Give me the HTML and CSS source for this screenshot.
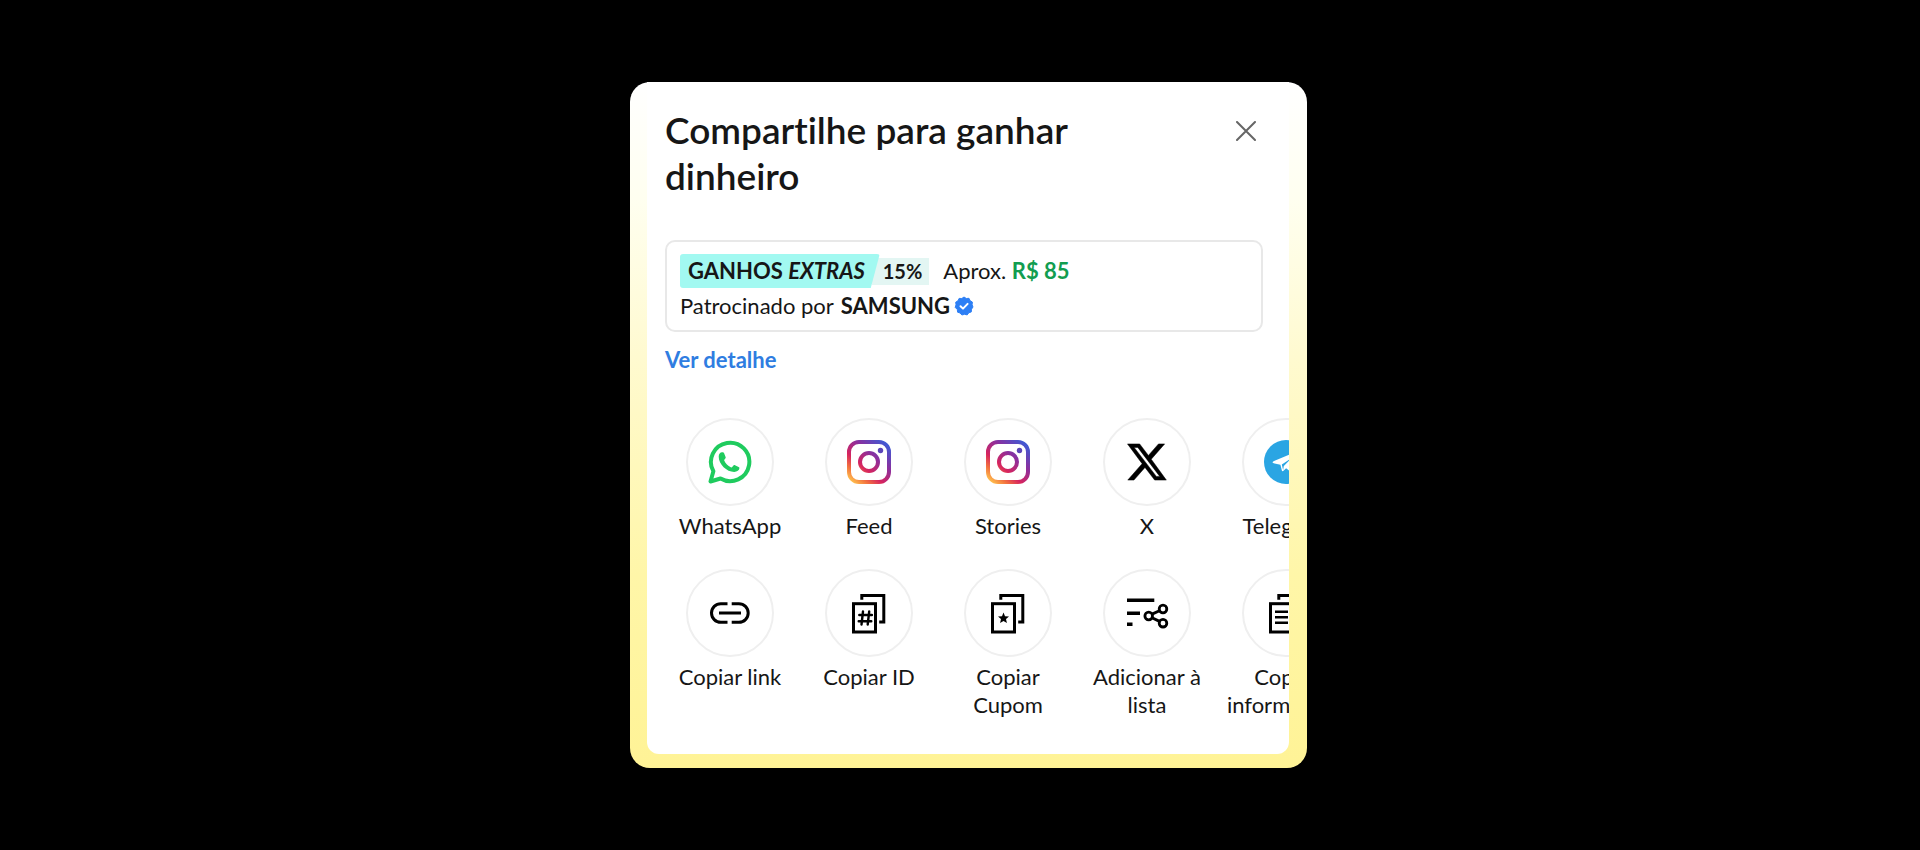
FILE: index.html
```html
<!DOCTYPE html>
<html lang="pt-BR">
<head>
    <meta charset="utf-8">
    <title>Compartilhe para ganhar dinheiro</title>
    <link rel="stylesheet" href="styles.css">
</head>
<body>
    <main class="card">
        <div class="panel">
            <header class="header">
                <h1>Compartilhe para ganhar dinheiro</h1>
                <button class="close" aria-label="Fechar">
                    <svg width="20" height="20" viewBox="0 0 20 20"><path d="M1 1l18 18M19 1L1 19" stroke="#666" stroke-width="2" stroke-linecap="round"/></svg>
                </button>
            </header>

            <section class="earnings">
                <div class="line">
                    <span class="tag">GANHOS <em>EXTRAS</em></span>
                    <span class="percent">15%</span>
                    <span>Aprox. <b class="amount">R$ 85</b></span>
                </div>
                <div class="line sponsor">
                    <span>Patrocinado por</span>
                    <b>SAMSUNG</b>
                    <svg width="20" height="20" viewBox="0 0 20 20">
                        <path fill="#2d7ff5" stroke="#2d7ff5" stroke-linejoin="round" d="M10 1l2.3 1.5 2.7-.2 1.1 2.4 2.3 1.4-.3 2.7L19 11l-1.5 2.2-.2 2.7-2.5.9-1.6 2.1-2.7-.6-2.6.7-1.8-2-2.5-.8-.3-2.7L1.2 11.4 2 8.8 1.7 6.2 4 4.8l1.1-2.4 2.7.1z"/>
                        <path fill="none" stroke="#fff" stroke-width="2" stroke-linecap="round" stroke-linejoin="round" d="M6.5 10.2l2.5 2.4 4.6-4.7"/>
                    </svg>
                </div>
            </section>
            <a class="details" href="#">Ver detalhe</a>

            <div class="share">
                <button class="item">
                    <span class="circle">
                        <svg width="44" height="44" viewBox="0 0 44 44">
                            <path fill="none" stroke="#1fcb5e" stroke-width="4" stroke-linejoin="round" d="M2.5 41.5l2.9-10.2A19.2 19.2 0 1 1 12.5 38.5z"/>
                            <path fill="#1fcb5e" d="M14 12.3c-1.8 0-3.3 1.8-3.3 4.4 0 7.5 8 15.2 15.5 15.2 2.9 0 5-1.6 5.2-3.6.1-.7-.2-1-.8-1.3L27 25.2c-.6-.3-1.1-.2-1.5.3l-1.3 1.6c-.4.5-.9.5-1.4.2-3-1.5-5.2-3.9-6.5-6.5-.2-.4-.1-.8.2-1.2l1-1.3c.3-.4.3-.8.1-1.3l-1.6-3.9c-.2-.6-.6-.8-1.2-.8z"/>
                        </svg>
                    </span>
                    WhatsApp
                </button>
                <button class="item">
                    <span class="circle">
                        <svg width="44" height="44" viewBox="0 0 44 44" fill="none" stroke="url(#insta)" stroke-width="4">
                            <defs>
                                <linearGradient id="insta" gradientUnits="userSpaceOnUse" x1="5" y1="42" x2="39" y2="2">
                                    <stop offset="0" stop-color="#ffc04d"/>
                                    <stop offset=".18" stop-color="#f2703f"/>
                                    <stop offset=".36" stop-color="#d6245f"/>
                                    <stop offset=".65" stop-color="#8a2f9e"/>
                                    <stop offset="1" stop-color="#3c5bd6"/>
                                </linearGradient>
                            </defs>
                            <rect x="2" y="2" width="40" height="40" rx="10"/>
                            <circle cx="22" cy="22" r="9"/>
                            <circle cx="33.5" cy="10.5" r="2.7" fill="#5a45b8" stroke="none"/>
                        </svg>
                    </span>
                    Feed
                </button>
                <button class="item">
                    <span class="circle">
                        <svg width="44" height="44" viewBox="0 0 44 44" fill="none" stroke="url(#insta)" stroke-width="4">
                            <rect x="2" y="2" width="40" height="40" rx="10"/>
                            <circle cx="22" cy="22" r="9"/>
                            <circle cx="33.5" cy="10.5" r="2.7" fill="#5a45b8" stroke="none"/>
                        </svg>
                    </span>
                    Stories
                </button>
                <button class="item">
                    <span class="circle">
                        <svg width="40" height="40" viewBox="0 0 24 24"><path stroke="#000" stroke-width=".3" d="M18.901 1.153h3.68l-8.04 9.19L23.6 22.846h-7.006l-5.8-7.584-6.638 7.584H.474l8.6-9.83L.3 1.154h7.294l5.243 6.932ZM17.61 20.644h2.039L6.486 3.24H4.298Z"/></svg>
                    </span>
                    X
                </button>
                <button class="item">
                    <span class="circle">
                        <svg width="44" height="44" viewBox="0 0 44 44">
                            <circle cx="22" cy="22" r="22" fill="#2aa5e3"/>
                            <path fill="#fff" d="M8.6 22.6c0-.8.7-1.2 2-1.8L31 12.200c1.500-.5 2.500.2 2.200 2l-3.300 17c-.3 1.500-1.300 1.800-2.600 1l-5.200-3.900-2.600 2.500c-.8.8-1.600.5-1.700-.6l-1.400-5.500-5.800-1.200c-1.200-.2-2-.5-2-.9z"/>
                            <path fill="#2aa5e3" d="M17.8 24.600l10.200-6.900-8.200 8.400-.7 4z"/>
                        </svg>
                    </span>
                    Telegram
                </button>

                <button class="item">
                    <span class="circle">
                        <svg width="44" height="44" viewBox="0 0 44 44" fill="none" stroke="#000" stroke-width="3"><path d="M19.5 12.7h-6.7a9.3 9.3 0 0 0 0 18.6h6.7M23.7 12.7h7.2a9.3 9.3 0 0 1 0 18.6h-7.2M11 22h22"/></svg>
                    </span>
                    Copiar link
                </button>
                <button class="item">
                    <span class="circle">
                        <svg width="44" height="44" viewBox="0 0 44 44" fill="none" stroke="#000" stroke-width="3">
                            <rect x="6.5" y="12.7" width="22" height="28.3"/>
                            <path d="M14.8 8.8V4.4h22v26.7h-4.6"/>
                            <path stroke-width="2.4" stroke-linecap="round" d="M16 20.5l-1.5 13M22.2 20.5l-1.5 13M12.3 24h12.6M11.7 30.2h12.6"/>
                        </svg>
                    </span>
                    Copiar ID
                </button>
                <button class="item">
                    <span class="circle">
                        <svg width="44" height="44" viewBox="0 0 44 44" fill="none" stroke="#000" stroke-width="3">
                            <rect x="6.5" y="12.7" width="22" height="28.3"/>
                            <path d="M14.8 8.8V4.4h22v26.7h-4.6"/>
                            <path fill="#000" stroke="none" d="M17.5 21.5l1.5 3.7 4 .3-3 2.6.9 3.9-3.4-2.1-3.4 2.1.9-3.9-3-2.6 4-.3z"/>
                        </svg>
                    </span>
                    Copiar Cupom
                </button>
                <button class="item">
                    <span class="circle">
                        <svg width="44" height="44" viewBox="0 0 44 44" fill="none" stroke="#000" stroke-width="3">
                            <path stroke-width="3.5" d="M2 9.2h27.3M2 22.2h13M2 33.2h5.5"/>
                            <path d="M26.5 23.3l8.5-3.8M26.5 26.5l8.5 4.2"/>
                            <g stroke-width="2.8"><circle cx="23.7" cy="25" r="3.8"/><circle cx="38" cy="18" r="3.8"/><circle cx="38" cy="32.2" r="3.8"/></g>
                        </svg>
                    </span>
                    Adicionar à lista
                </button>
                <button class="item">
                    <span class="circle">
                        <svg width="44" height="44" viewBox="0 0 44 44" fill="none" stroke="#000" stroke-width="3">
                            <rect x="6.5" y="12.7" width="22" height="28.3"/>
                            <path d="M14.8 8.8V4.4h22v26.7h-4.6"/>
                            <path stroke-width="2.4" d="M11 20.7h13M11 26.2h13M11 31.7h13"/>
                        </svg>
                    </span>
                    Copiar informações
                </button>
            </div>
        </div>
    </main>
</body>
</html>
```
FILE: styles.css
```css
* { box-sizing: border-box; }
body { margin: 0; min-height: 100vh; padding-left: 17px; display: flex; align-items: center; justify-content: center; background: #000; color: #161616; font-family: Lato, "Liberation Sans", sans-serif; font-size: 22px; line-height: 28px; }
button { padding: 0; background: none; border: none; color: inherit; font: inherit; cursor: pointer; }
svg { display: block; flex: none; }
b { font-weight: 700; }

.card { width: 100%; max-width: 677px; padding: 0 18px 14px 17px; border-radius: 20px; background: linear-gradient(#fff 0, #fffff0 17%, #fffad0 40%, #fff6a8 72%, #fff396 100%); }
.panel { padding: 25px 0 35px 18px; border-radius: 0 0 12px 12px; background: #fff; overflow: hidden; }

.header { display: flex; justify-content: space-between; align-items: flex-start; padding-right: 33px; }
h1 { margin: 0; max-width: 460px; font-size: 37px; line-height: 46px; font-weight: 600; font-variant-ligatures: none; }
.close { margin-top: 14px; }

.earnings { margin: 41px 26px 0 0; padding: 12px 13px 10px; border: 2px solid #e8e8e8; border-radius: 10px; }
.line { display: flex; align-items: center; }
.tag { padding: 3px 15px 3px 8px; border-radius: 3px; background: #a2f9f1; clip-path: polygon(0 0, 100% 0, calc(100% - 9px) 100%, 0 100%); font-weight: 700; }
.percent { margin: 0 14px 0 -8px; padding: 0 7px 0 11px; background: #e3f6f3; font-size: 20px; font-weight: 700; line-height: 27px; }
.amount { color: #129d50; }
.sponsor { margin-top: 4px; }
.sponsor b { margin: 0 4px 0 7px; }
.details { display: inline-block; margin-top: 14px; color: #2f7de1; font-weight: 700; text-decoration: none; }

.share { display: grid; grid-template-columns: repeat(5, 112px); gap: 29px 27px; margin-top: 44px; padding-left: 9px; }
.item { display: flex; flex-direction: column; align-items: center; text-align: center; }
.circle { display: flex; align-items: center; justify-content: center; width: 88px; height: 88px; margin-bottom: 6px; border: 2px solid #efefef; border-radius: 50%; }
```
